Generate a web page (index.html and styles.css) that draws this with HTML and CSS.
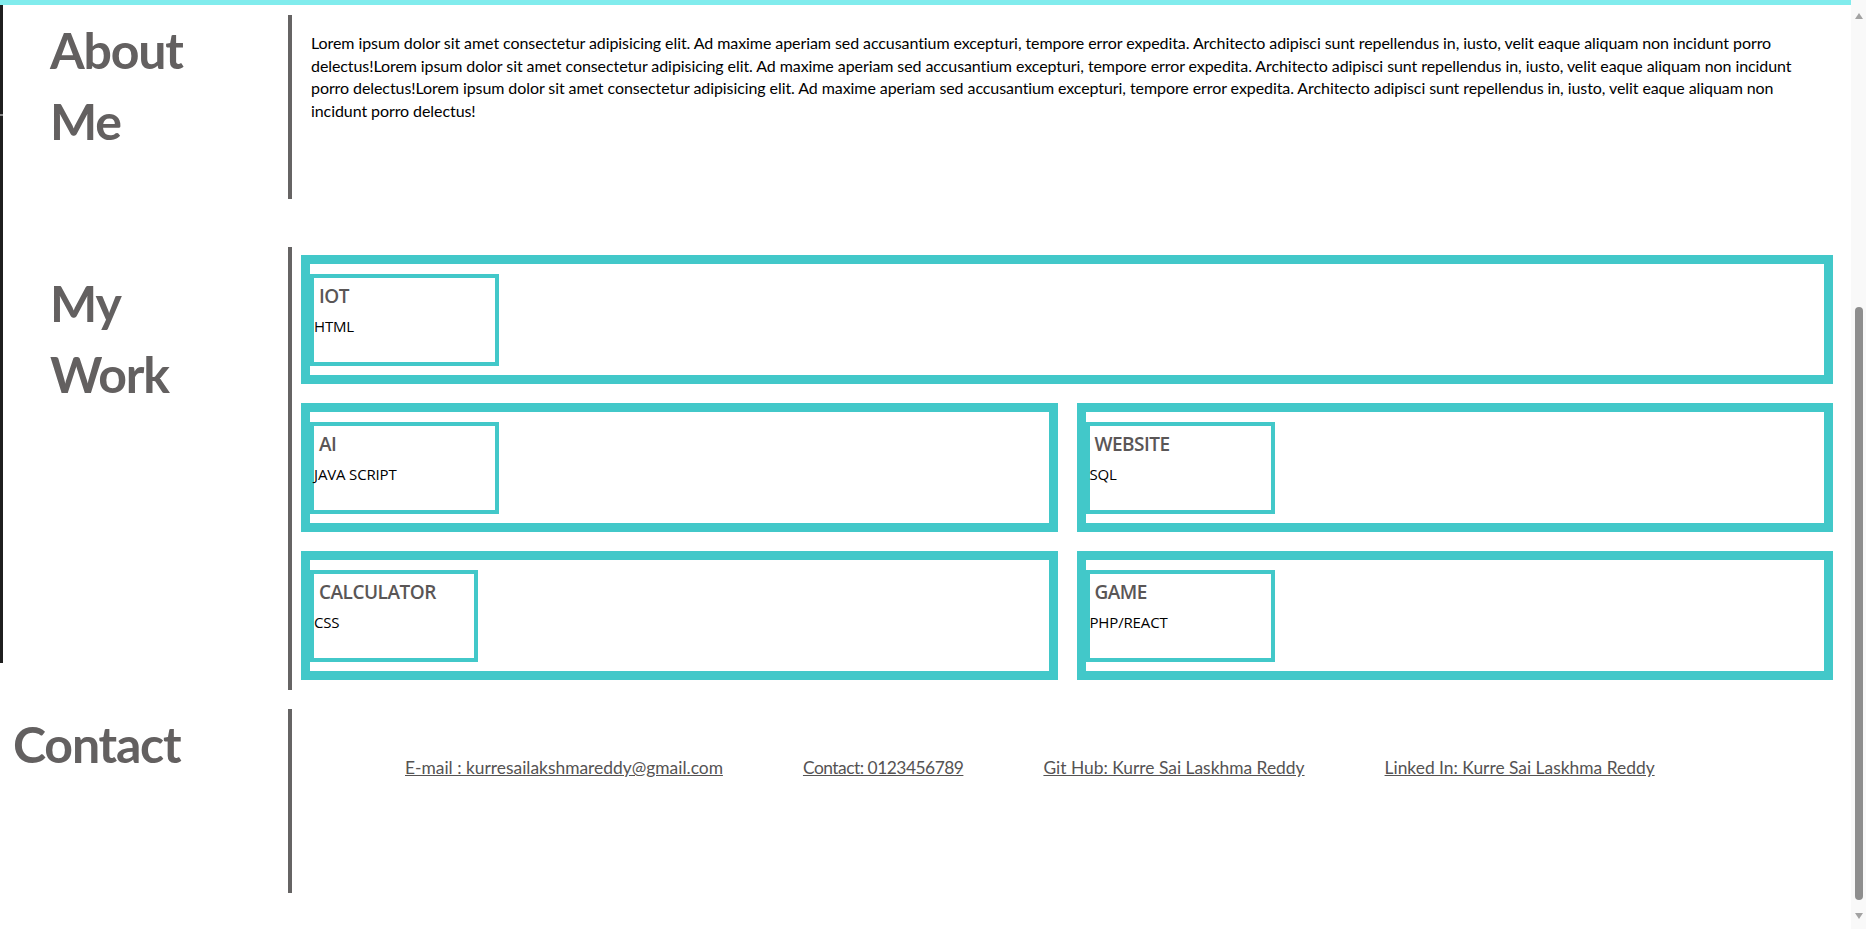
FILE: index.html
```html
<!DOCTYPE html>
<html lang="en">
<head>
<meta charset="utf-8">
<title>Portfolio</title>
<link rel="stylesheet" href="styles.css">
</head>
<body>
<div class="page">
  <div class="edge"><span class="edge-tick"></span></div>
  <main class="main">
    <div class="topbar"></div>

    <section class="section section--about">
      <h2 class="section-title">About Me</h2>
      <div class="section-body about-body">
        <p class="about-text">Lorem ipsum dolor sit amet consectetur adipisicing elit. Ad maxime aperiam sed accusantium excepturi, tempore error expedita. Architecto adipisci sunt repellendus in, iusto, velit eaque aliquam non incidunt porro delectus!Lorem ipsum dolor sit amet consectetur adipisicing elit. Ad maxime aperiam sed accusantium excepturi, tempore error expedita. Architecto adipisci sunt repellendus in, iusto, velit eaque aliquam non incidunt porro delectus!Lorem ipsum dolor sit amet consectetur adipisicing elit. Ad maxime aperiam sed accusantium excepturi, tempore error expedita. Architecto adipisci sunt repellendus in, iusto, velit eaque aliquam non incidunt porro delectus!</p>
      </div>
    </section>

    <section class="section section--work">
      <h2 class="section-title section-title--work">My Work</h2>
      <div class="section-body work-body">
        <div class="projects">
          <div class="project project--wide">
            <div class="project-info">
              <h3 class="project-name">IOT</h3>
              <p class="project-tech">HTML</p>
            </div>
          </div>
          <div class="project">
            <div class="project-info">
              <h3 class="project-name">AI</h3>
              <p class="project-tech">JAVA SCRIPT</p>
            </div>
          </div>
          <div class="project">
            <div class="project-info">
              <h3 class="project-name">WEBSITE</h3>
              <p class="project-tech">SQL</p>
            </div>
          </div>
          <div class="project">
            <div class="project-info project-info--narrow">
              <h3 class="project-name">CALCULATOR</h3>
              <p class="project-tech">CSS</p>
            </div>
          </div>
          <div class="project">
            <div class="project-info">
              <h3 class="project-name">GAME</h3>
              <p class="project-tech">PHP/REACT</p>
            </div>
          </div>
        </div>
      </div>
    </section>

    <section class="section section--contact">
      <h2 class="section-title section-title--contact">Contact</h2>
      <div class="section-body contact-body">
        <a class="contact-link" href="#">E-mail : kurresailakshmareddy@gmail.com</a>
        <a class="contact-link contact-link--phone" href="#">Contact: 0123456789</a>
        <a class="contact-link" href="#">Git Hub: Kurre Sai Laskhma Reddy</a>
        <a class="contact-link" href="#">Linked In: Kurre Sai Laskhma Reddy</a>
      </div>
    </section>
  </main>

  <div class="scrollbar">
    <span class="sb-arrow sb-arrow--up"></span>
    <span class="sb-thumb"></span>
    <span class="sb-arrow sb-arrow--down"></span>
  </div>
</div>
</body>
</html>
```

FILE: styles.css
```css
html, body {
  margin: 0;
  padding: 0;
  background: #ffffff;
}

body {
  font-family: Lato, "Open Sans", sans-serif;
  color: #000;
}

.page {
  position: relative;
  display: flex;
  height: 929px;
  overflow: hidden;
}

.edge {
  position: absolute;
  left: 0;
  top: 5px;
  width: 3px;
  height: 658px;
  background: #1f1f1f;
}

.edge-tick {
  position: absolute;
  left: 0;
  top: 109px;
  width: 3px;
  height: 2px;
  background: #8a8a8a;
}

.main {
  flex: 1;
  min-width: 0;
}

.topbar {
  height: 5px;
  background: #81eced;
}

.section {
  display: grid;
  grid-template-columns: 288px 1fr;
}

.section-title {
  margin: 0;
  padding-left: 50px;
  width: 170px;
  font-family: Lato, sans-serif;
  font-size: 50px;
  line-height: 71px;
  font-weight: 700;
  color: #636060;
  letter-spacing: -1.2px;
}

.section-title--work {
  padding-top: 21px;
}

.section-title--contact {
  padding-left: 13px;
  width: 260px;
}

.section-body {
  border-left: 4px solid #666464;
}

/* About */
.section--about {
  margin-top: 10px;
  height: 184px;
}

.about-body {
  padding: 17px 18px 0 19px;
}

.about-text {
  margin: 0;
  font-size: 16px;
  line-height: 22.5px;
  letter-spacing: -0.08px;
  color: #000;
}

/* Work */
.section--work {
  margin-top: 48px;
}

.work-body {
  padding: 8px 18px 10px 9px;
}

.projects {
  display: grid;
  grid-template-columns: 1fr 1fr;
  gap: 19px;
}

.project {
  border: 9px solid #42c8c9;
  padding: 10px 0 9px;
}

.project--wide {
  grid-column: 1 / -1;
}

.project-info {
  box-sizing: border-box;
  width: 189px;
  height: 92px;
  border: 4px solid #42c8c9;
  font-family: "Open Sans", sans-serif;
}

.project-info--narrow {
  width: 168px;
}

.project-name {
  margin: 6px 0 0;
  padding-left: 5px;
  font-size: 19px;
  line-height: 24px;
  font-weight: 600;
  letter-spacing: -0.5px;
  color: #5a5656;
}

.project-tech {
  margin: 8px 0 0;
  font-size: 15px;
  line-height: 20px;
  letter-spacing: -0.15px;
  color: #000;
}

/* Contact */
.section--contact {
  margin-top: 19px;
  height: 184px;
}

.contact-body {
  display: flex;
  align-items: flex-start;
  gap: 80px;
  padding: 49px 0 0 113px;
}

.contact-link {
  font-family: Lato, sans-serif;
  font-size: 17.4px;
  line-height: 20px;
  color: #555353;
  text-decoration: underline;
}

.contact-link--phone {
  letter-spacing: -0.5px;
}

/* Scrollbar */
.scrollbar {
  flex: 0 0 15px;
  background: #f9f9f9;
  display: flex;
  flex-direction: column;
  align-items: center;
}

.sb-arrow {
  width: 0;
  height: 0;
  border-left: 4px solid transparent;
  border-right: 4px solid transparent;
}

.sb-arrow--up {
  margin-top: 13px;
  border-bottom: 6px solid #a3a3a3;
}

.sb-thumb {
  margin-top: 288px;
  width: 8px;
  height: 593px;
  border-radius: 4px;
  background: #8e8e8e;
}

.sb-arrow--down {
  margin-top: 13px;
  border-top: 6px solid #a3a3a3;
}
```
